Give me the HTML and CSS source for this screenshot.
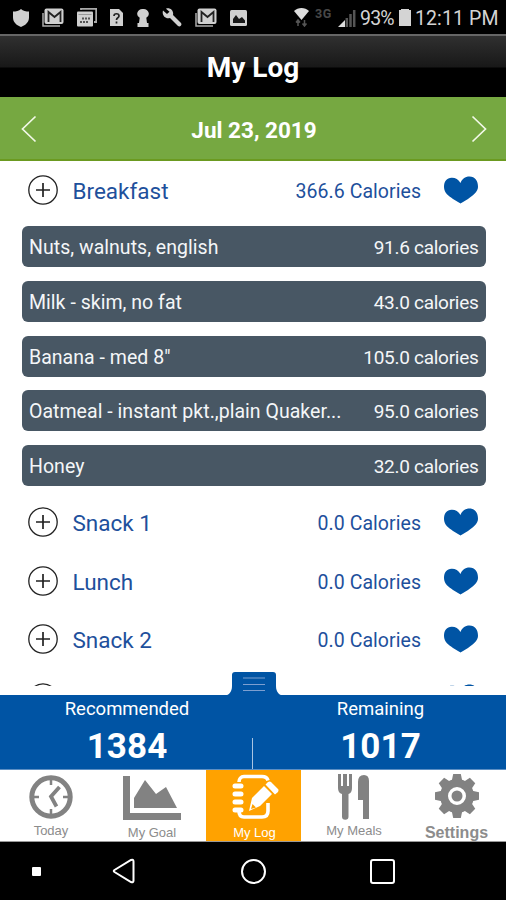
FILE: index.html
```html
<!DOCTYPE html>
<html lang="en">
<head>
<meta charset="utf-8">
<title>My Log</title>
<link rel="stylesheet" href="styles.css">
</head>
<body>
<svg class="defs" aria-hidden="true">
  <symbol id="plus" viewBox="0 0 32 32"><circle cx="16" cy="16" r="14.2" fill="none" stroke="#222" stroke-width="1.3"/><path d="M16 9v14M9 16h14" stroke="#222" stroke-width="1.7"/></symbol>
  <symbol id="heart" viewBox="0 0 36 28"><path d="M17.500 7C19 3 22 .5 26.500 .5C32 .5 35.200 5 35 11C35 16 29 20 25 23L17.500 27.500L10 23C6 20 1 17 1 11C1 5 4 2 8.500 1.700C12 1.500 15.500 3 17.500 7Z" fill="#0054a4"/></symbol>
  <symbol id="mail" viewBox="0 0 22 19"><path d="M1 5v13h17" fill="none" stroke="#aaa" stroke-width="1.500"/><rect x="2.500" y=".5" width="19" height="15.500" rx="2" fill="#d0d0d0"/><path d="M6.500 14V4l6 5 6-5V14" fill="none" stroke="#222" stroke-width="1.800"/></symbol>
</svg>
<main class="screen">
  <div class="status">
    <div class="notices">
      <svg width="16" height="18" viewBox="0 0 16 18"><path d="M8 0c2 2 5 2.500 8 2.500v6c0 5-4 8-8 9.500-4-1.500-8-4.500-8-9.500v-6C3 2.500 6 2 8 0Z" fill="#d0d0d0"/></svg>
      <svg width="22" height="19"><use href="#mail"/></svg>
      <svg width="20" height="19" viewBox="0 0 20 19"><path d="M4 2V.8h15.200V14H17" fill="none" stroke="#aaa" stroke-width="1.800"/><rect y="3.500" width="16" height="15" rx="1" fill="#d0d0d0"/><path d="M1.500 6.500h13" stroke="#999"/><path d="M5 10.500h8M3 14h8" stroke="#555" stroke-width="2" stroke-dasharray="2 1"/></svg>
      <svg width="13" height="17" viewBox="0 0 13 17"><path d="M0 0h9l4 4v13H0Z" fill="#d0d0d0"/><path d="M4 7c0-3 5-3 5 0 0 2-2.500 1.500-2.500 4M6.500 12.500v2" fill="none" stroke="#222" stroke-width="1.700"/></svg>
      <svg width="12" height="18" viewBox="0 0 12 18"><path d="M6 0a5.500 4.800 0 0 1 3.300 8.800L10 14h1.500v4H.5v-4H2l.7-5.200A5.500 4.800 0 0 1 6 0Z" fill="#d0d0d0"/></svg>
      <svg width="20" height="19" viewBox="0 0 20 19"><path d="M1 2.500 5 6l2.500-2.200L4 .7C8 -.7 12 2.500 11 7l8 8c1.500 2-1 4.500-3 3l-8-8C4 11.500-.5 8 1 2.500Z" fill="#d0d0d0"/></svg>
      <svg width="22" height="19"><use href="#mail"/></svg>
      <svg width="17" height="16" viewBox="0 0 17 16"><rect width="17" height="16" rx="1.500" fill="#d0d0d0"/><path d="M3 13V9l3-4 3 4 3-2 3 3.500V13Z" fill="#181818"/></svg>
    </div>
    <svg class="wifi" width="15" height="19" viewBox="0 0 15 19"><path d="M0 3c4-4 11-4 15 0L7.500 12Z" fill="#ddd"/><path d="M4 12v6M2 14.500 4 12l2 2.500M10.500 12v6M8.500 15.500l2 2.500 2-2.500" stroke="#555" stroke-width="1.500" fill="none"/></svg>
    <span class="net">3G</span>
    <svg class="signal" width="18" height="18" viewBox="0 0 18 18"><path d="M0 18 7 11v7Z" fill="#ddd"/><path d="M8.800 18V9M12.500 18V5M16.200 18V1" stroke="#555" stroke-width="2.500"/></svg>
    <span class="pct">93%</span>
    <svg class="battery" width="12" height="17" viewBox="0 0 12 17"><path d="M2 0h8v1h2V17H0V1h2Z" fill="#d4d4d4"/></svg>
    <span class="clock">12:11 PM</span>
  </div>
  <header class="title">My Log</header>
  <div class="date">
    <svg width="16" height="28" viewBox="0 0 16 28"><path d="M14.500 1.500 1.500 14l13 12.500" fill="none" stroke="#f2f8e8" stroke-width="1.700"/></svg>
    <span>Jul 23, 2019</span>
    <svg width="16" height="28" viewBox="0 0 16 28"><path d="m1.500 1.500 13 12.500-13 12.500" fill="none" stroke="#f2f8e8" stroke-width="1.700"/></svg>
  </div>
  <section class="log">
    <div class="meal"><svg class="add"><use href="#plus"/></svg><span class="name">Breakfast</span><span class="total">366.6 Calories</span><svg class="fav"><use href="#heart"/></svg></div>
    <ul class="foods">
      <li><span>Nuts, walnuts, english</span><span class="cal">91.6 calories</span></li>
      <li><span>Milk - skim, no fat</span><span class="cal">43.0 calories</span></li>
      <li><span>Banana - med 8"</span><span class="cal">105.0 calories</span></li>
      <li><span>Oatmeal - instant pkt.,plain Quaker...</span><span class="cal">95.0 calories</span></li>
      <li><span>Honey</span><span class="cal">32.0 calories</span></li>
    </ul>
    <div class="meal"><svg class="add"><use href="#plus"/></svg><span class="name">Snack 1</span><span class="total">0.0 Calories</span><svg class="fav"><use href="#heart"/></svg></div>
    <div class="meal"><svg class="add"><use href="#plus"/></svg><span class="name">Lunch</span><span class="total">0.0 Calories</span><svg class="fav"><use href="#heart"/></svg></div>
    <div class="meal"><svg class="add"><use href="#plus"/></svg><span class="name">Snack 2</span><span class="total">0.0 Calories</span><svg class="fav"><use href="#heart"/></svg></div>
    <div class="meal"><svg class="add"><use href="#plus"/></svg><span class="name"></span><span class="total"></span><svg class="fav"><use href="#heart"/></svg></div>
  </section>
  <section class="summary">
    <svg class="handle" width="64" height="24" viewBox="0 0 64 24"><path d="M0 24c7 0 10-4 10-10V3q0-3 3-3h38q3 0 3 3v11c0 6 3 10 10 10Z" fill="#0054a4"/><path d="M21 6h22M21 12.500h22M21 18.500h22" stroke="#7d9fd0" stroke-width="1.200"/></svg>
    <div class="stat"><span class="label">Recommended</span><b>1384</b></div>
    <i class="divider"></i>
    <div class="stat"><span class="label">Remaining</span><b>1017</b></div>
  </section>
  <nav class="tabs">
    <div class="tab today">
      <svg width="46" height="46" viewBox="0 0 46 46"><circle cx="23" cy="23" r="19.200" fill="none" stroke="#828282" stroke-width="5"/><path d="M23 6v5M23 35v5M6 23h5M35 23h5" stroke="#828282" stroke-width="2.500"/><path d="M31.500 13l-8.500 9.500 5.500 10" fill="none" stroke="#828282" stroke-width="3.800"/></svg>
      <span>Today</span>
    </div>
    <div class="tab goal">
      <svg width="58" height="44" viewBox="0 0 58 44"><path d="M0 0h7v37h51v7H0ZM11 32V22L22 4l11 14 10-7 11 21Z" fill="#828282"/></svg>
      <span>My Goal</span>
    </div>
    <div class="tab active">
      <svg width="48" height="46" viewBox="0 0 48 46"><path d="M7 8c0-3 2-5.500 5-5.500h18q5 0 6 4M7 37c0 4 2 6 5 6h18q6 0 6-6v-8" fill="none" stroke="#fff" stroke-width="3.600"/><path d="M3 12h6M3 20h6M3 28h6M3 36h6" stroke="#fff" stroke-width="5" stroke-linecap="round"/><path d="m17 37 3-13L32 12l8 8-12 12ZM33.500 10.500l2.500-2.500q2-1 3 0l7 7q1 1 0 3l-3 2.500Z" fill="#fff"/><path d="m19 35 1.500-5 3.500 3.500Z" fill="#ffa200"/></svg>
      <span>My Log</span>
    </div>
    <div class="tab meals">
      <svg width="32" height="46" viewBox="0 0 32 46"><path d="M0 0h3v12h2V0h4v12h2V0h3v14q0 5-3.500 6v22.500a3.250 3.250 0 0 1-6.500 0V20Q0 19 0 14ZM20 26V8q0-7 6-7 5 0 5 6v38h-6V26Z" fill="#828282"/></svg>
      <span>My Meals</span>
    </div>
    <div class="tab settings">
      <svg width="44" height="44" viewBox="0 0 44 44"><g fill="#828282"><circle cx="22" cy="22" r="13" fill="none" stroke="#828282" stroke-width="8"/><circle cx="22" cy="22" r="5.500"/><path id="cog" d="M16.500 8 18.200 0h7.600l1.700 8Z"/><use href="#cog" transform="rotate(45 22 22)"/><use href="#cog" transform="rotate(90 22 22)"/><use href="#cog" transform="rotate(135 22 22)"/><use href="#cog" transform="rotate(180 22 22)"/><use href="#cog" transform="rotate(225 22 22)"/><use href="#cog" transform="rotate(270 22 22)"/><use href="#cog" transform="rotate(315 22 22)"/></g></svg>
      <span>Settings</span>
    </div>
  </nav>
  <footer class="keys">
    <i class="dot"></i>
    <svg width="24" height="27" viewBox="0 0 24 27"><path d="M2.500 12 19 2q2.500-1 2.500 1.500v19q0 2.500-2.500 1.500L2.500 14q-1.500-1 0-2Z" fill="none" stroke="#fff" stroke-width="2"/></svg>
    <i class="home"></i>
    <i class="recent"></i>
  </footer>
</main>
</body>
</html>
```
FILE: styles.css
```css
* { box-sizing: border-box; }
body { margin: 0; background: #000; font-family: Roboto, "Liberation Sans", sans-serif; }
.defs { position: absolute; width: 0; height: 0; }
.screen { width: 506px; height: 900px; overflow: hidden; display: flex; flex-direction: column; background: #fff; }
.screen > * { flex-shrink: 0; }
.screen svg { display: block; flex: none; }

.status { height: 34px; background: #000; color: #d4d4d4; display: flex; align-items: center; padding: 1px 7px 0 13px; font-size: 19.500px; white-space: nowrap; }
.notices { width: 234px; display: flex; align-items: center; justify-content: space-between; }
.wifi { margin-left: 47px; }
.net { width: 18px; margin: -9px 0 0 6px; font-size: 12.500px; font-weight: 700; color: #484848; letter-spacing: .5px; }
.signal { margin-left: 5px; }
.pct { width: 34px; margin: 1px 0 0 4px; letter-spacing: -.8px; }
.battery { margin-left: 5px; }
.clock { margin: 1px 0 0 4px; letter-spacing: .1px; }

.title { height: 63px; border-top: 2px solid #666; background: linear-gradient(#303030 0, #181818 31px, #000 32px); color: #fff; font-size: 28px; font-weight: 700; line-height: 64px; text-align: center; }
.date { height: 64px; background: #76a841; border-bottom: 2px solid #6b9a20; color: #fff; display: flex; align-items: center; justify-content: space-between; padding: 2px 19px 0 21px; font-size: 22.500px; font-weight: 700; }
.date span { padding-top: 1px; }

.log { height: 525px; overflow: hidden; padding: 0 21px; }
.meal { height: 58.500px; display: flex; align-items: center; padding: 0 6px 1px 6px; color: #1e509c; }
.add { width: 32px; height: 32px; }
.name { flex: 1; margin-left: 13.500px; font-size: 22.500px; letter-spacing: 0; padding-top: 2px; }
.total { font-size: 19.500px; letter-spacing: .05px; padding-top: 3px; }
.fav { width: 36px; height: 28px; margin: 0 0 0 22px; }
.foods { list-style: none; margin: 0; padding: 6.500px 0 7.500px; display: flex; flex-direction: column; gap: 13.800px; }
.foods li { height: 41px; margin-left: .5px; margin-right: -.5px; padding: 2px 7px 0 7.500px; background: #485764; border-radius: 6px; color: #f4f6f8; display: flex; justify-content: space-between; align-items: center; font-size: 19.500px; letter-spacing: .03px; white-space: nowrap; }
.foods .cal { font-size: 19px; letter-spacing: -.28px; }

.summary { position: relative; margin-top: 9px; height: 75px; background: #0054a4; color: #fff; display: grid; grid-template-columns: 252px 1px 253px; border-bottom: 1px solid #5c8fc4; }
.handle { position: absolute; left: 222px; top: -23px; }
.stat { display: flex; flex-direction: column; align-items: center; padding: 3px 0 0 2px; }
.stat b { font-size: 35px; line-height: 42px; letter-spacing: .1px; margin-top: 6px; }
.label { font-size: 18.500px; line-height: 22px; }
.divider { align-self: end; height: 31px; background: #a9c4e2; }

.tabs { height: 72px; display: grid; grid-template-columns: 103px 103px 95px 103px 102px; border-bottom: 1px solid #999; color: #8c8c8c; }
.tab { display: flex; flex-direction: column; align-items: center; justify-content: space-between; padding: 4px 0 2px; font-family: "Liberation Sans", sans-serif; font-size: 13px; line-height: 15px; }
.today { padding-right: 1px; padding-bottom: 3px; }
.goal { padding-right: 5px; padding-bottom: 1px; }
.goal svg { margin-top: 2px; }
.active { background: #ffa200; color: #fff; padding-left: 2px; padding-bottom: 1px; }
.active svg { margin-left: 3px; }
.meals { padding-left: 3px; padding-bottom: 3px; }
.settings { padding-left: 3px; padding-bottom: 1px; font-size: 16px; font-weight: 700; }

.keys { height: 58px; background: #000; display: grid; grid-template-columns: 73px 101px 159px 99px; align-items: center; justify-items: center; }
.dot { width: 9px; height: 9px; background: #fff; border-radius: 1px; }
.home { width: 25px; height: 25px; border: 2px solid #fff; border-radius: 50%; }
.recent { width: 25px; height: 25px; border: 2px solid #fff; border-radius: 3px; }
```
